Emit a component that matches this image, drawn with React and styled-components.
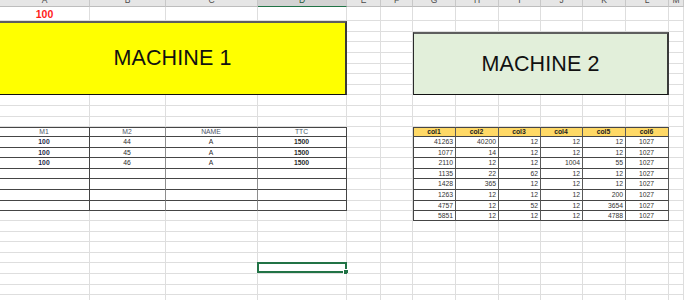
import React from "react";
import styled, { createGlobalStyle } from "styled-components";

const COLS = [90, 76, 92, 89, 34, 32, 43, 43, 42, 42, 43, 43, 15];
const LETTERS = ["A", "B", "C", "D", "E", "F", "G", "H", "I", "J", "K", "L", "M"];
const ROWS = [14, 11, 10, 11, 11, 10, 11, 10, 11, 11, 10, 10, 11, 10, 11, 10, 11, 11, 10, 10, 11, 10, 11, 10, 11, 11, 10, 11];
const SELECTED = { row: 25, col: 3 };

const LEFT_HEAD = ["M1", "M2", "NAME", "TTC"];
const LEFT_DATA = [
  ["100", "44", "A", "1500"],
  ["100", "45", "A", "1500"],
  ["100", "46", "A", "1500"],
  ["", "", "", ""],
  ["", "", "", ""],
  ["", "", "", ""],
  ["", "", "", ""],
];

const RIGHT_HEAD = ["col1", "col2", "col3", "col4", "col5", "col6"];
const RIGHT_DATA = [
  ["41263", "40200", "12", "12", "12", "1027"],
  ["1077", "14", "12", "12", "12", "1027"],
  ["2110", "12", "12", "1004", "55", "1027"],
  ["1135", "22", "62", "12", "12", "1027"],
  ["1428", "365", "12", "12", "12", "1027"],
  ["1263", "12", "12", "12", "200", "1027"],
  ["4757", "12", "52", "12", "3654", "1027"],
  ["5851", "12", "12", "12", "4788", "1027"],
];

const Global = createGlobalStyle`
  html, body { margin: 0; padding: 0; background: #fff; overflow: hidden; }
  body { font-family: "Liberation Sans", Arial, sans-serif; }
  * { box-sizing: border-box; }
`;

const Sheet = styled.div`
  display: grid;
  grid-template-columns: ${COLS.map((w) => `${w}px`).join(" ")};
  grid-template-rows: 7px ${ROWS.map((h) => `${h}px`).join(" ")};
  width: 684px;
  height: 300px;
  overflow: hidden;
  background: #fff;
`;

const ColHeader = styled.div`
  display: flex;
  align-items: flex-end;
  justify-content: center;
  overflow: hidden;
  padding-bottom: 1px;
  line-height: 9px;
  font-size: 8.5px;
  color: ${(p) => (p.$active ? "#1f5a38" : "#4a4a4a")};
  background: ${(p) => (p.$active ? "#d3d3d3" : "#e6e6e6")};
  border-right: 1px solid #c8c8c8;
  border-bottom: 1px solid ${(p) => (p.$active ? "#217346" : "#bdbdbd")};
`;

const GridCell = styled.div`
  border-right: 1px solid #dedede;
  border-bottom: 1px solid #dedede;
  position: relative;
  display: flex;
  align-items: center;
  justify-content: center;
  font-size: 10.5px;
  font-weight: 700;
  color: #ff1a1a;
`;

const SelectedCell = styled(GridCell)`
  &::before {
    content: "";
    position: absolute;
    left: -1px;
    top: -1px;
    right: -1px;
    bottom: 0;
    border: 2px solid #217346;
  }
  &::after {
    content: "";
    position: absolute;
    right: -3px;
    bottom: -2px;
    width: 4px;
    height: 4px;
    background: #217346;
    border: 1px solid #fff;
  }
`;

const TitleBox = styled.div`
  grid-column: ${(p) => p.$cols};
  grid-row: ${(p) => p.$rows};
  display: flex;
  align-items: center;
  justify-content: center;
  background: ${(p) => p.$fill};
  border-top: 2px solid #5e5e5e;
  border-left: ${(p) => (p.$left ? "1px solid #2a2a2a" : "none")};
  border-right: 2px solid #3a3a3a;
  border-bottom: 1px solid #111;
  font-size: 21.5px;
  color: #111;
  letter-spacing: 0.1px;
`;

const TCell = styled.div`
  display: flex;
  align-items: center;
  justify-content: ${(p) => (p.$align === "right" ? "flex-end" : "center")};
  padding: 0 2px 0 1px;
  overflow: hidden;
  white-space: nowrap;
  background: ${(p) => p.$fill || "#fff"};
  border-right: 1px solid ${(p) => p.$rc || "#454545"};
  border-bottom: 1px solid #454545;
  border-top: ${(p) => (p.$top ? "1px solid #454545" : "none")};
  border-left: ${(p) => (p.$left ? "1px solid #454545" : "none")};
  font-size: 6.8px;
  line-height: 8px;
  font-weight: ${(p) => (p.$bold ? 700 : 400)};
  color: ${(p) => p.$color || "#2a2a2a"};
`;

function cellFor(r, c) {
  const key = `${r}-${c}`;
  // yellow merged block: rows 2-8, cols A-D
  if (r >= 2 && r <= 8 && c <= 3) {
    if (r === 2 && c === 0)
      return (
        <TitleBox key={key} $cols="1 / 5" $rows="3 / 10" $fill="#ffff00">
          MACHINE 1
        </TitleBox>
      );
    return null;
  }
  // green merged block: rows 3-8, cols G-L
  if (r >= 3 && r <= 8 && c >= 6 && c <= 11) {
    if (r === 3 && c === 6)
      return (
        <TitleBox key={key} $cols="7 / 13" $rows="4 / 10" $fill="#e2efda" $left>
          MACHINE 2
        </TitleBox>
      );
    return null;
  }
  // left table: rows 12-19, cols A-D
  if (r >= 12 && r <= 19 && c <= 3) {
    const head = r === 12;
    const text = head ? LEFT_HEAD[c] : LEFT_DATA[r - 13][c];
    return (
      <TCell
        key={key}
        $top={head}
        $rc={c === 1 || c === 2 ? "#8e8e8e" : undefined}
        $bold={!head && (c === 0 || c === 3)}
        $color={head ? "#4d5566" : c === 0 ? "#1e2a4a" : undefined}
      >
        {text}
      </TCell>
    );
  }
  // right table: rows 12-20, cols G-L
  if (r >= 12 && r <= 20 && c >= 6 && c <= 11) {
    const head = r === 12;
    const i = c - 6;
    const text = head ? RIGHT_HEAD[i] : RIGHT_DATA[r - 13][i];
    return (
      <TCell
        key={key}
        $top={head}
        $left={i === 0}
        $rc="#5a5a5a"
        $fill={head ? "#ffd966" : undefined}
        $bold={head}
        $align={!head && i < 5 ? "right" : "center"}
        $color={head ? "#222" : "#333"}
      >
        {text}
      </TCell>
    );
  }
  if (r === SELECTED.row && c === SELECTED.col) return <SelectedCell key={key} />;
  if (r === 1 && c === 0) return <GridCell key={key}>100</GridCell>;
  return <GridCell key={key} />;
}

export default function App() {
  const items = [];
  LETTERS.forEach((l, c) =>
    items.push(
      <ColHeader key={`h-${l}`} $active={c === SELECTED.col}>
        {l}
      </ColHeader>
    )
  );
  for (let r = 1; r <= ROWS.length; r++) {
    for (let c = 0; c < COLS.length; c++) {
      const el = cellFor(r, c);
      if (el) items.push(el);
    }
  }
  return (
    <>
      <Global />
      <Sheet>{items}</Sheet>
    </>
  );
}
